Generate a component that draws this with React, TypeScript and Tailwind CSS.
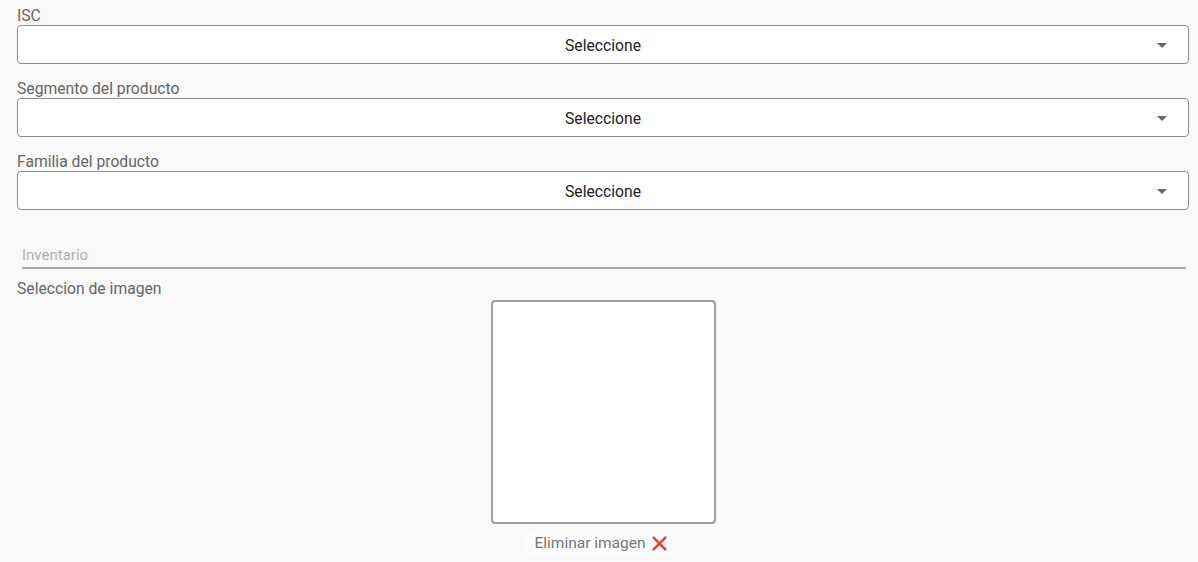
import React from 'react';

const fields = ['ISC', 'Segmento del producto', 'Familia del producto'];

function SelectBox({ label }: { label: string }) {
  return (
    <div className="flex flex-col">
      <span className="h-[18px] text-[15.7px] leading-[18px] text-[#666]">{label}</span>
      <div className="relative flex h-[39px] items-center justify-center rounded-[4px] border border-[#8e8e8e] bg-white">
        <span className="pt-[2px] text-[15.7px] text-[#222]">Seleccione</span>
        <svg className="absolute right-[21px] top-[17px]" width="10" height="5" viewBox="0 0 10 5">
          <path d="M0 0 L10 0 L5 5 Z" fill="#666" />
        </svg>
      </div>
    </div>
  );
}

export default function App() {
  return (
    <div
      className="h-[562px] w-[1198px] overflow-hidden bg-[#f9f9f9] pl-[17px] pr-[9px] pt-[7px]"
      style={{ fontFamily: 'Roboto, "Liberation Sans", sans-serif' }}
    >
      <div className="flex flex-col gap-4">
        {fields.map((f) => (
          <SelectBox key={f} label={f} />
        ))}
      </div>

      {/* Inventario */}
      <div className="mt-[33px] pl-[5px] pr-[3px]">
        <div className="flex h-[26px] items-center border-b-2 border-[#a8a8a8]">
          <span className="text-[15px] text-[#b0b0b0]">Inventario</span>
        </div>
      </div>

      <div className="mt-[11px] h-[18px] text-[15.7px] leading-[18px] text-[#666]">Seleccion de imagen</div>

      <div className="mt-[2px] flex flex-col items-center">
        <div className="h-[224px] w-[225px] rounded-[4px] border-2 border-[#a0a0a0] bg-white" />
        <div className="mt-[6px] flex h-[27px] items-center gap-[5px] rounded-full bg-[#fbfbfb] pl-[10px] pr-[14px]">
          <span className="text-[15.5px] text-[#777]">Eliminar imagen</span>
          <svg width="17" height="17" viewBox="0 0 16 16">
            <path d="M2.5 2.5 L13.5 13.5 M13.5 2.5 L2.5 13.5" stroke="#f23b3b" strokeWidth="2.4" strokeLinecap="round" />
          </svg>
        </div>
      </div>
    </div>
  );
}
